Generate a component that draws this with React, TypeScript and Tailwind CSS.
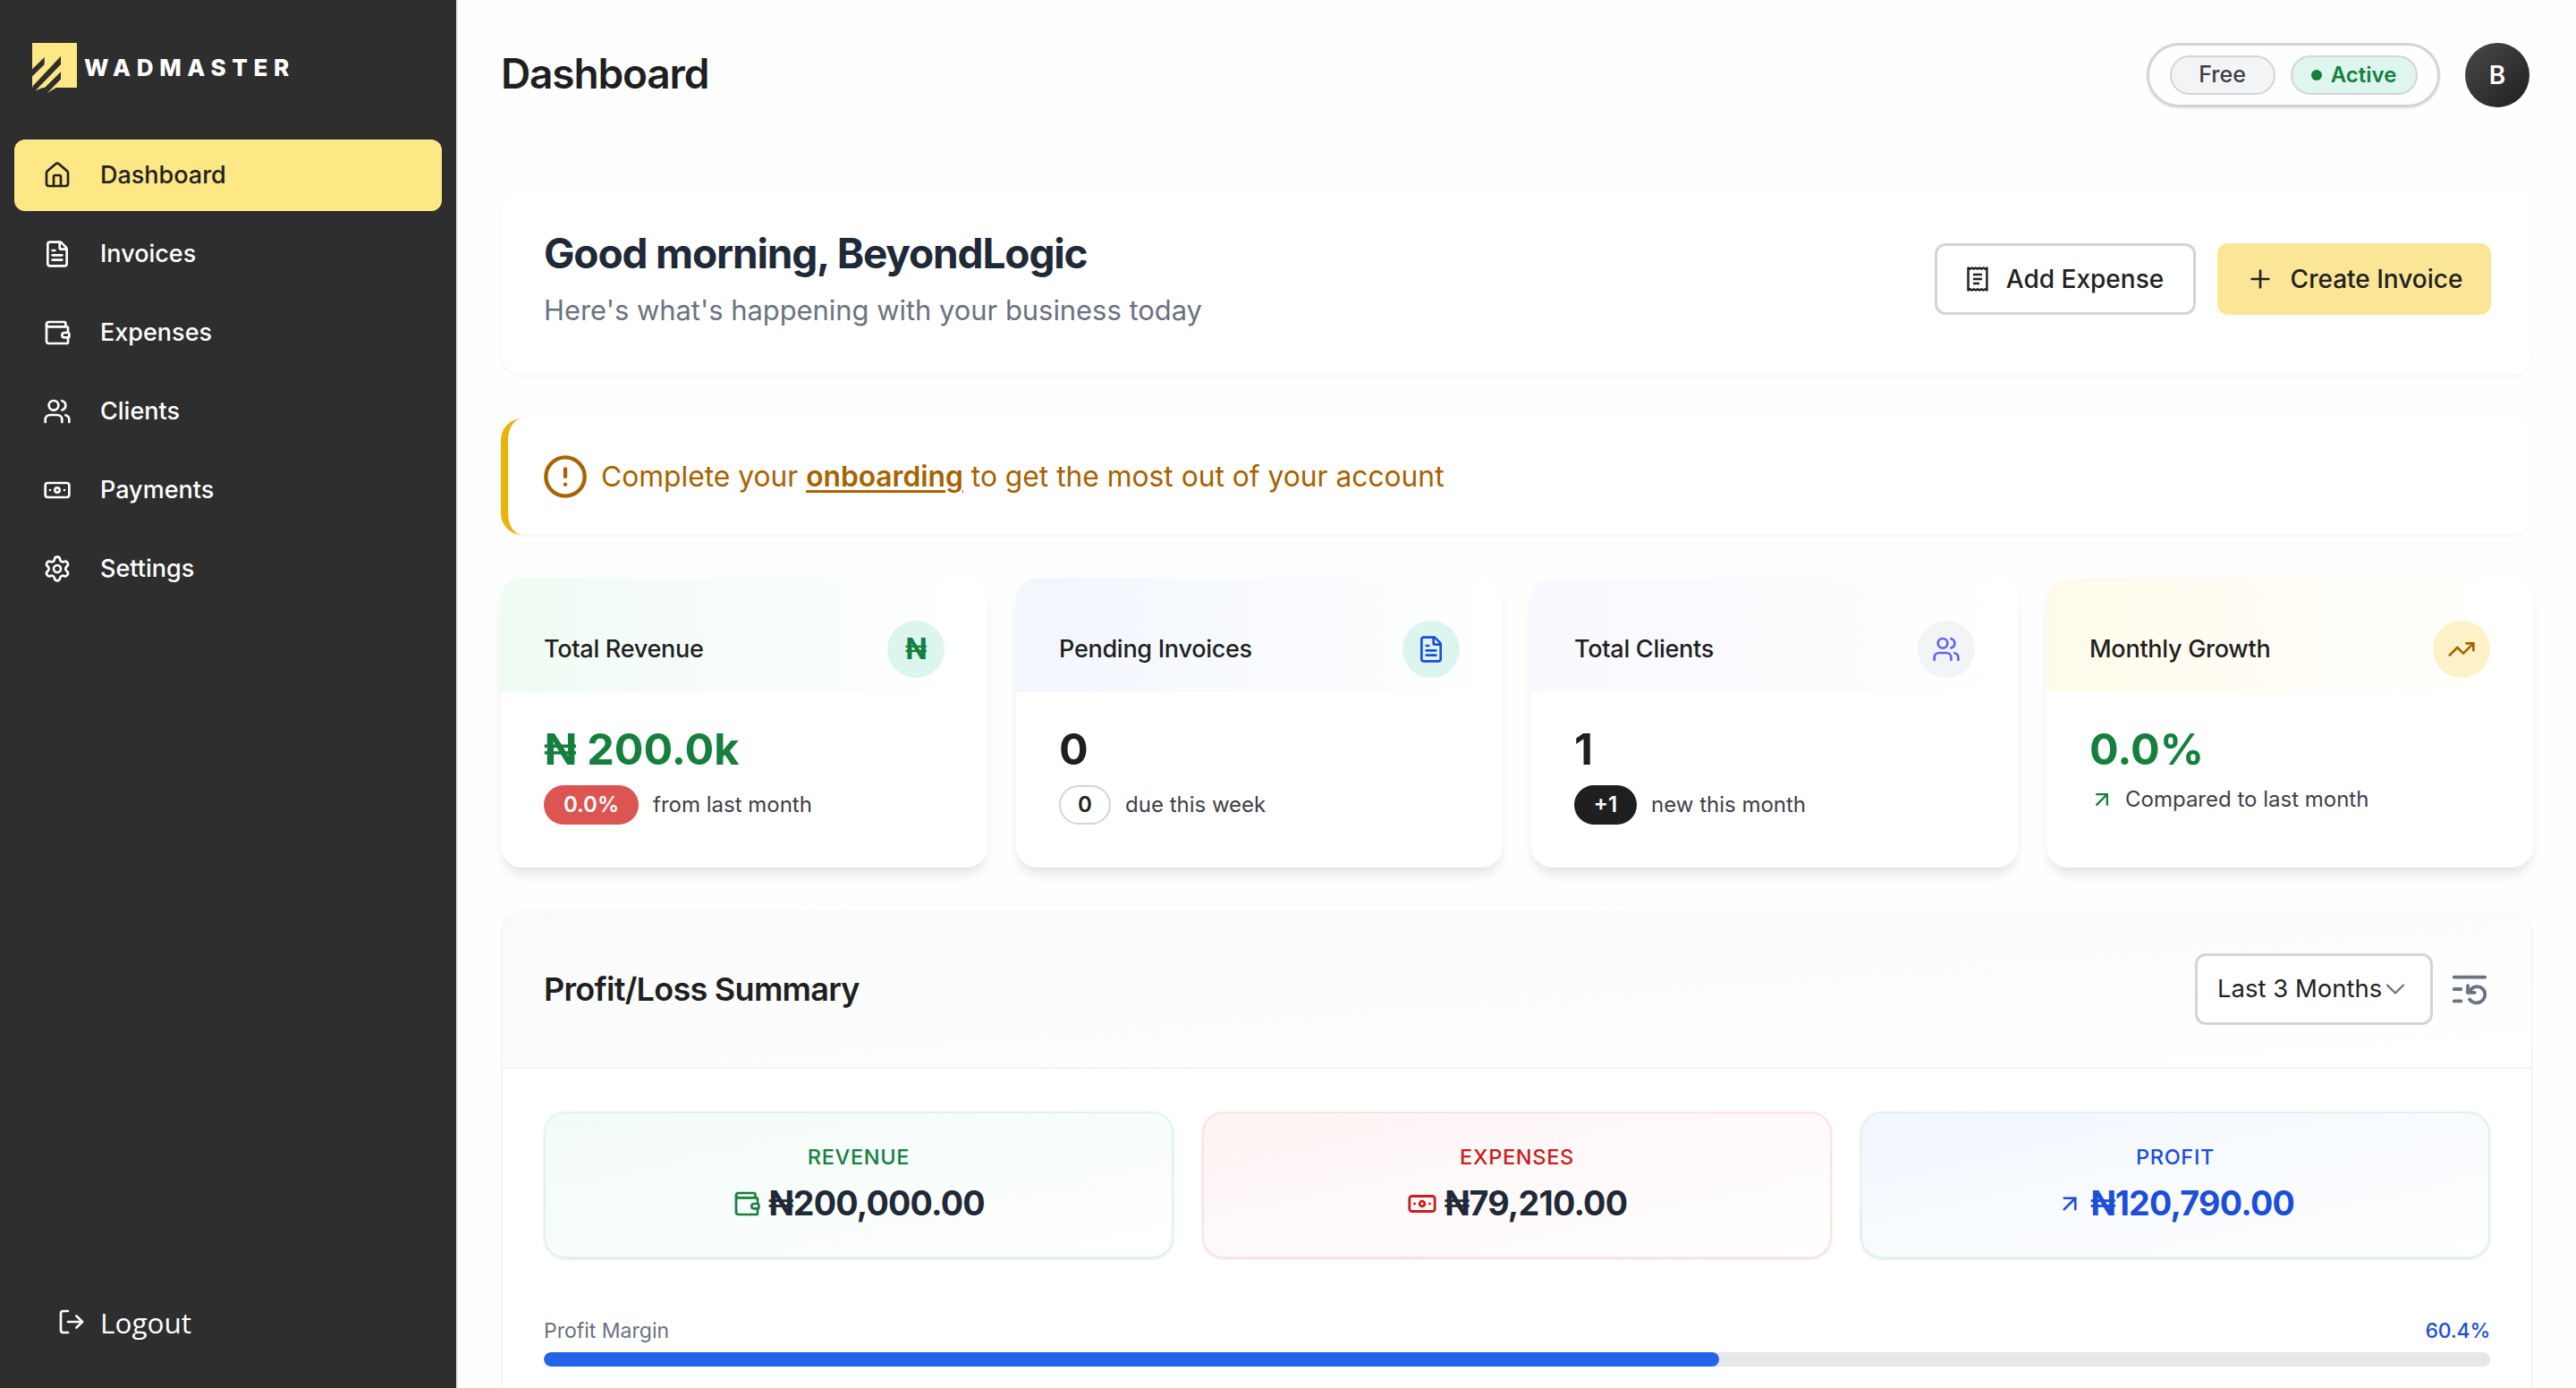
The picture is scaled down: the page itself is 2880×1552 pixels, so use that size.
import { ArrowUpRight, Banknote, ChevronDown, CircleAlert, FileText, House, ListRestart, LogOut, Plus, Settings, TrendingUp, Users, Wallet } from "lucide-react";
import type { ReactNode } from "react";

const body = "font-['Inter','Liberation_Sans',sans-serif]";

const nav = [
  { label: "Dashboard", icon: House, active: true },
  { label: "Invoices", icon: FileText },
  { label: "Expenses", icon: Wallet },
  { label: "Clients", icon: Users },
  { label: "Payments", icon: Banknote },
  { label: "Settings", icon: Settings },
];

function Logo() {
  return (
    <svg width="64" height="64" viewBox="0 0 64 64" className="shrink-0">
      <rect x="8" y="6" width="50" height="50" fill="#fde885" />
      <path d="M4 39.3 21.7 22v8L8.3 43.3Z" fill="#2e2e2e" />
      <path d="M8 55 40 20.7V30L11.7 59.3Z" fill="#2e2e2e" />
      <path d="M11.7 59.3 20 56h-5Z" fill="#fde885" />
      <path d="M40 38.3 22 56h9.6L40 46.7Z" fill="#2e2e2e" />
      <path d="M40 46.7 25 61.7 40 53Z" fill="#fde885" />
    </svg>
  );
}

function Sidebar() {
  return (
    <aside className={`w-[512px] shrink-0 bg-[#2e2e2e] border-r-2 border-[#e5e7eb] flex flex-col ${body}`}>
      <div className="flex items-start gap-0.5 pl-7 pt-[42px] h-[156px]">
        <Logo />
        <span className="text-white font-extrabold text-[26px] tracking-[0.255em] leading-none mt-[21px]">WADMASTER</span>
      </div>
      <nav className="flex flex-col gap-2 px-4">
        {nav.map((n) => (
          <a
            key={n.label}
            className={`h-20 rounded-xl flex items-center pl-8 gap-[32px] text-[27px] font-medium ${n.active ? "bg-[#fde885] text-[#222222]" : "text-white"}`}
          >
            <n.icon size={32} strokeWidth={2} />
            <span>{n.label}</span>
          </a>
        ))}
      </nav>
      <div className="mt-auto flex items-center pl-16 gap-[16px] pb-[50px] text-white text-[31.5px] font-['Open_Sans',sans-serif]">
        <LogOut size={32} strokeWidth={2} />
        <span>Logout</span>
      </div>
    </aside>
  );
}

function Header() {
  return (
    <header className="flex items-center justify-between h-[72px]">
      <h1 className="text-[46px] font-semibold text-[#1f1f1f] tracking-[-0.025em] mb-[3px]">Dashboard</h1>
      <div className="flex items-center gap-7 pr-1">
        <div className="flex items-center gap-[17px] h-[72px] w-[328px] justify-center rounded-full border-[3px] border-[#d4d4d4] shadow-sm">
          <span className="h-[44px] w-[118px] rounded-full bg-[#f3f4f6] border-2 border-[#d4d4d4] flex items-center justify-center text-[25px] font-medium text-[#3f3f46]">Free</span>
          <span className="h-[44px] w-[142px] rounded-full bg-[#dff5ef] border-2 border-[#d4d4d4] flex items-center justify-center gap-2.5 text-[24px] font-semibold text-[#15803d]">
            <i className="w-3 h-3 rounded-full bg-[#15803d]" />
            Active
          </span>
        </div>
        <div className="w-[72px] h-[72px] rounded-full bg-gradient-to-br from-[#4b4b4b] to-[#1f1f1f] ring-4 ring-white shadow flex items-center justify-center text-white text-[28px] font-semibold">B</div>
      </div>
    </header>
  );
}

function ReceiptIcon() {
  return (
    <svg width="24" height="30" viewBox="0 0 24 30" fill="none" stroke="#222222" strokeWidth="2.5">
      <path d="M1.5 2.5v25l2.1-1.2 2.1 1.2 2.1-1.2 2.1 1.2 2.1-1.2 2.1 1.2 2.1-1.2 2.1 1.2 2.1-1.2 2 1.2v-25l-2 1.2-2.1-1.2-2.1 1.2-2.1-1.2-2.1 1.2-2.1-1.2-2.1 1.2-2.1-1.2-2.1 1.2Z" strokeLinejoin="round" />
      <path d="M7 10h10M7 15h10M7 20h7" />
    </svg>
  );
}

function Welcome() {
  return (
    <section className="mt-[88px] h-[212px] rounded-3xl bg-white border border-[#fafafa] shadow-[0_2px_3px_rgba(0,0,0,0.03)] flex items-center justify-between pl-[47px] pr-[46px]">
      <div className="mb-[7px]">
        <h2 className="text-[46px] leading-[60px] font-bold text-[#1f2937] tracking-[-0.025em]">Good morning, BeyondLogic</h2>
        <p className="text-[30.9px] leading-[44px] mt-[12px] text-[#6b7280]">Here's what's happening with your business today</p>
      </div>
      <div className="flex gap-6 mb-1">
        <button className="h-20 w-[292px] rounded-xl border-[3px] border-[#d4d4d4] bg-white flex items-center justify-center gap-[20px] text-[28px] font-medium text-[#222222]">
          <ReceiptIcon />
          Add Expense
        </button>
        <button className="h-20 w-[306px] rounded-xl bg-[#fae696] flex items-center justify-center gap-[18px] text-[28px] font-medium text-[#222222]">
          <Plus size={32} strokeWidth={2} />
          Create Invoice
        </button>
      </div>
    </section>
  );
}

function Alert() {
  return (
    <section className="mt-12 h-[130px] rounded-3xl bg-white border-l-8 border-[#eab308] shadow-[0_2px_3px_rgba(0,0,0,0.03)] flex items-center pl-[38px] gap-[14px] text-[31.75px] text-[#a86200]">
      <CircleAlert size={52} strokeWidth={2} />
      <span>
        Complete your <a className="font-semibold underline underline-offset-4 decoration-[3px]">onboarding</a> to get the most out of your account
      </span>
    </section>
  );
}

function StatCard({ title, head, circle, icon, children }: { title: string; head: string; circle: string; icon: ReactNode; children: ReactNode }) {
  return (
    <div className="w-[544px] h-[324px] rounded-3xl bg-white overflow-hidden shadow-[0_10px_14px_-4px_rgba(0,0,0,0.12)]">
      <div className={`h-32 pl-12 pr-12 pt-12 pb-4 flex items-center justify-between bg-gradient-to-r ${head} to-white`}>
        <span className="text-[27px] font-medium text-[#1f1f1f] tracking-[-0.01em]">{title}</span>
        <span className={`w-16 h-16 rounded-full flex items-center justify-center ${circle}`}>{icon}</span>
      </div>
      <div className="pl-12 pt-[29px]">{children}</div>
    </div>
  );
}

function Pill({ className, children }: { className: string; children: ReactNode }) {
  return <span className={`h-11 rounded-full flex items-center justify-center text-[24px] font-semibold ${className}`}>{children}</span>;
}

function Stats() {
  return (
    <section className="mt-12 flex gap-8">
      <StatCard title="Total Revenue" head="from-[#f0fbf4]" circle="bg-[#dcf5ef]" icon={<span className="text-[32px] font-bold text-[#15803d]">₦</span>}>
        <div className="text-[48.5px] leading-[70px] font-bold text-[#15803d]">₦ 200.0k</div>
        <div className="mt-[5px] flex items-center gap-4 text-[24px] text-[#3f3f46]">
          <Pill className="w-[106px] bg-[#dc5552] text-white">0.0%</Pill>
          from last month
        </div>
      </StatCard>
      <StatCard title="Pending Invoices" head="from-[#f2f6fd]" circle="bg-[#dcf5ef]" icon={<FileText size={32} strokeWidth={2} className="text-[#1d4ed8]" />}>
        <div className="text-[48.5px] leading-[70px] font-bold text-[#1f1f1f]">0</div>
        <div className="mt-[5px] flex items-center gap-4 text-[24px] text-[#3f3f46]">
          <Pill className="w-[58px] bg-white border-2 border-[#d4d4d4] text-[#1f1f1f]">0</Pill>
          due this week
        </div>
      </StatCard>
      <StatCard title="Total Clients" head="from-[#f8f8fe]" circle="bg-[#f3f4f6]" icon={<Users size={32} strokeWidth={2} className="text-[#6366f1]" />}>
        <div className="text-[48.5px] leading-[70px] font-bold text-[#1f1f1f]">1</div>
        <div className="mt-[5px] flex items-center gap-4 text-[24px] text-[#3f3f46]">
          <Pill className="w-[70px] bg-[#1f1f1f] text-white">+1</Pill>
          new this month
        </div>
      </StatCard>
      <StatCard title="Monthly Growth" head="from-[#fffbeb]" circle="bg-[#fdf1c7]" icon={<TrendingUp size={32} strokeWidth={2} className="text-[#a86200]" />}>
        <div className="text-[48.5px] leading-[70px] font-bold text-[#15803d]">0.0%</div>
        <div className="mt-[3px] flex items-center gap-3 text-[24px] text-[#3f3f46]">
          <ArrowUpRight size={28} strokeWidth={2} className="text-[#15803d]" />
          Compared to last month
        </div>
      </StatCard>
    </section>
  );
}

function Summary({ label, amount, from, border, labelColor, amountColor, icon }: { label: string; amount: string; from: string; border: string; labelColor: string; amountColor: string; icon: ReactNode }) {
  return (
    <div className={`h-[164px] rounded-3xl border-2 ${border} bg-gradient-to-br ${from} to-white flex flex-col items-center justify-center shadow-sm`}>
      <div className={`text-[23.5px] font-medium tracking-[0.03em] ${labelColor}`}>{label}</div>
      <div className="mt-[8px] mb-[2px] flex items-center gap-2">
        {icon}
        <span className={`text-[37.6px] leading-[52px] font-bold tracking-[-0.02em] ${amountColor}`}>{amount}</span>
      </div>
    </div>
  );
}

function ProfitLoss() {
  return (
    <section className="mt-12 rounded-3xl bg-white border-x-2 border-[#f5f5f6] overflow-hidden">
      <div className="h-[177px] border-b-2 border-[#f3f4f6] bg-gradient-to-br from-[#f9fafb] to-white pl-[46px] pr-[46px] flex items-center justify-between">
        <h3 className="text-[36px] font-semibold text-[#1f1f1f] tracking-[-0.02em]">Profit/Loss Summary</h3>
        <div className="flex items-center gap-[18px]">
          <div className="h-20 w-[266px] rounded-xl border-[3px] border-[#d4d4d4] bg-white flex items-center pl-[22px] text-[27.5px] text-[#222222]">
            Last 3 Months
            <ChevronDown size={36} strokeWidth={1.5} className="text-[#6b7280] -ml-[3px]" />
          </div>
          <ListRestart size={46} strokeWidth={2} className="text-[#6b7280]" />
        </div>
      </div>
      <div className="pl-[46px] pr-[46px] pt-12 pb-12">
        <div className="grid grid-cols-3 gap-8">
          <Summary label="REVENUE" amount="₦200,000.00" from="from-[#f2fbf7]" border="border-[#dcf5ef]" labelColor="text-[#15803d]" amountColor="text-[#1f2937]" icon={<Wallet size={32} strokeWidth={2} className="text-[#15803d]" />} />
          <Summary label="EXPENSES" amount="₦79,210.00" from="from-[#fef4f4]" border="border-[#fde2e2]" labelColor="text-[#c81e1e]" amountColor="text-[#1f2937]" icon={<Banknote size={34} strokeWidth={2} className="text-[#c81e1e]" />} />
          <Summary label="PROFIT" amount="₦120,790.00" from="from-[#f2f7fe]" border="border-[#dcf5ef]" labelColor="text-[#1d4ed8]" amountColor="text-[#1d4ed8]" icon={<ArrowUpRight size={30} strokeWidth={2} className="text-[#1d4ed8]" />} />
        </div>
        <div className="mt-[64px] flex justify-between text-[23px] leading-[34px]">
          <span className="text-[#6b7280]">Profit Margin</span>
          <span className="font-medium text-[#1d4ed8] tracking-[-0.01em]">60.4%</span>
        </div>
        <div className="mt-[7px] h-4 rounded-full bg-[#e5e7eb] overflow-hidden">
          <div className="h-full rounded-full bg-[#2563eb]" style={{ width: "60.4%" }} />
        </div>
      </div>
    </section>
  );
}

export default function App() {
  return (
    <div className="h-screen flex overflow-hidden bg-[#fefefe]">
      <Sidebar />
      <main className={`flex-1 min-w-0 pl-12 pr-12 pt-12 overflow-hidden ${body}`}>
        <Header />
        <Welcome />
        <Alert />
        <Stats />
        <ProfitLoss />
      </main>
    </div>
  );
}
